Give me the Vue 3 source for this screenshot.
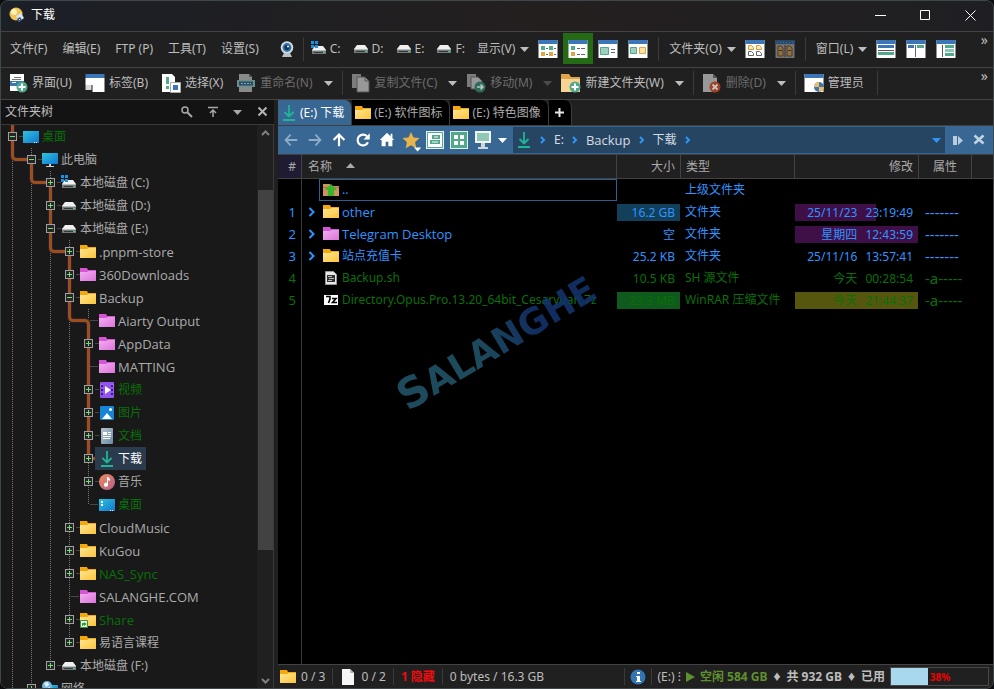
<script setup>
import { computed } from 'vue'

const ROW = 23
const STEP = 19

const tree = [
  { d: 0, s: '-', icon: 'desktop', t: '桌面', c: 'green' },
  { d: 1, s: '-', icon: 'pc', t: '此电脑' },
  { d: 2, s: '+', icon: 'sysdrive', t: '本地磁盘 (C:)' },
  { d: 2, s: '+', icon: 'drive', t: '本地磁盘 (D:)' },
  { d: 2, s: '-', icon: 'drive', t: '本地磁盘 (E:)' },
  { d: 3, s: '+', icon: 'folder', t: '.pnpm-store' },
  { d: 3, s: '+', icon: 'pink', t: '360Downloads' },
  { d: 3, s: '-', icon: 'folder', t: 'Backup' },
  { d: 4, s: '', icon: 'pink', t: 'Aiarty Output' },
  { d: 4, s: '+', icon: 'pink', t: 'AppData' },
  { d: 4, s: '', icon: 'pink', t: 'MATTING' },
  { d: 4, s: '+', icon: 'video', t: '视频', c: 'green' },
  { d: 4, s: '+', icon: 'picture', t: '图片', c: 'green' },
  { d: 4, s: '+', icon: 'doc', t: '文档', c: 'green' },
  { d: 4, s: '+', icon: 'download', t: '下载', c: 'selected' },
  { d: 4, s: '+', icon: 'music', t: '音乐' },
  { d: 4, s: '', icon: 'desktop2', t: '桌面', c: 'green' },
  { d: 3, s: '+', icon: 'folder', t: 'CloudMusic' },
  { d: 3, s: '+', icon: 'folder', t: 'KuGou' },
  { d: 3, s: '+', icon: 'folder', t: 'NAS_Sync', c: 'green' },
  { d: 3, s: '', icon: 'pink', t: 'SALANGHE.COM' },
  { d: 3, s: '+', icon: 'share', t: 'Share', c: 'green' },
  { d: 3, s: '+', icon: 'folder', t: '易语言课程' },
  { d: 2, s: '+', icon: 'drive', t: '本地磁盘 (F:)' },
  { d: 1, s: '+', icon: 'network', t: '网络' }
]

const cx = (d) => 11.5 + d * STEP
const cy = (i) => i * ROW + 11.5
const isLatin = (t) => /^[\x20-\x7e]+$/.test(t)

const guides = computed(() => {
  const bottom = tree.length * ROW
  const out = [{ x: cx(0), y1: 0, y2: bottom }]
  for (let d = 1; d <= 4; d++) {
    const at = tree.map((n, i) => (n.d === d ? i : -1)).filter((i) => i >= 0)
    out.push({ x: cx(d), y1: at[0] * ROW, y2: cy(at[at.length - 1]) })
  }
  return out
})

const trail = `M${cx(0)} 0V${cy(1) - 4}q0 4 4 4H${cx(1)}V${cy(2) - 4}q0 4 4 4H${cx(2)}V${cy(5) - 4}q0 4 4 4H${cx(3)}V${cy(8) - 4}q0 4 4 4H${cx(4) - 4}q4 0 4 4V${cy(14)}h8`

const menus = ['文件(F)', '编辑(E)', 'FTP (P)', '工具(T)', '设置(S)']
const drives = [
  { t: 'C:', icon: 'sysdrive' },
  { t: 'D:', icon: 'drive' },
  { t: 'E:', icon: 'drive' },
  { t: 'F:', icon: 'drive' }
]
const views = ['v-details', 'v-list', 'v-thumb', 'v-tiles']
const layouts = ['l-rows', 'l-cols', 'l-tree']

const tabs = [
  { t: '(E:) 下载', icon: 'download', on: true },
  { t: '(E:) 软件图标', icon: 'folder' },
  { t: '(E:) 特色图像', icon: 'folder' }
]
const crumbs = ['E:', 'Backup', '下载']

const files = [
  { n: 1, icon: 'folder', t: 'other', size: '16.2 GB', sb: '#123f5a', type: '文件夹', day: '25/11/23', time: '23:19:49', db: '#3f0f47', dw: 66, at: '-------' },
  { n: 2, icon: 'pink', t: 'Telegram Desktop', size: '空', type: '文件夹', day: '星期四', time: '12:43:59', db: '#3f0f47', dw: 100, at: '-------' },
  { n: 3, icon: 'folder', t: '站点充值卡', size: '25.2 KB', type: '文件夹', day: '25/11/16', time: '13:57:41', at: '-------' },
  { n: 4, icon: 'sh', t: 'Backup.sh', size: '10.5 KB', type: 'SH 源文件', day: '今天', time: '00:28:54', at: '-a-----', file: true },
  { n: 5, icon: 'zip', t: 'Directory.Opus.Pro.13.20_64bit_Cesaryuan.7z', size: '23.3 MB', sb: '#0f5a1c', type: 'WinRAR 压缩文件', day: '今天', time: '21:44:37', db: '#56560f', dw: 100, at: '-a-----', file: true }
]
const used = 38
</script>

<template>
  <svg class="sprite" width="0" height="0" aria-hidden="true">
    <defs>
      <linearGradient id="gy" x1="0" y1="0" x2="1" y2="1"><stop offset="0" stop-color="#ffe694" /><stop offset="1" stop-color="#fcc43a" /></linearGradient>
      <linearGradient id="gp" x1="0" y1="0" x2="1" y2="1"><stop offset="0" stop-color="#f3aff0" /><stop offset="1" stop-color="#dc74dc" /></linearGradient>
      <linearGradient id="gb" x1="0" y1="0" x2="1" y2="1"><stop offset="0" stop-color="#2cc3dc" /><stop offset="1" stop-color="#1276d0" /></linearGradient>
      <linearGradient id="gm" x1="0" y1="0" x2="1" y2="1"><stop offset="0" stop-color="#f08a5a" /><stop offset="1" stop-color="#b0608c" /></linearGradient>
      <linearGradient id="gd" x1="0" y1="0" x2="1" y2="1"><stop offset="0" stop-color="#b4c4d0" /><stop offset="1" stop-color="#6d8ba3" /></linearGradient>
    </defs>
    <symbol id="folder" viewBox="0 0 16 16"><path d="M0 1h7l1 2h8v3H0z" fill="#f5a80c" /><path d="M0 5h7l2-1h7v10H0z" fill="url(#gy)" /></symbol>
    <symbol id="pink" viewBox="0 0 16 16"><path d="M0 1h7l1 2h8v3H0z" fill="#d456d4" /><path d="M0 5h7l2-1h7v10H0z" fill="url(#gp)" /></symbol>
    <symbol id="share" viewBox="0 0 16 16"><path d="M0 1h7l1 2h8v3H0z" fill="#f5a80c" /><path d="M0 5h7l2-1h7v10H0z" fill="url(#gy)" /><path d="M.5 8.500h7v7h-7z" fill="#fff" stroke="#2ca02c" /><path d="M2 14v-3h2v-1l3 2-3 2v-1H3v1z" fill="#2ca02c" /></symbol>
    <symbol id="updir" viewBox="0 0 16 16"><path d="M0 2h7l1 2h8v10H0z" fill="#c9955c" /><path d="M0 5h16v1H0z" fill="#a97440" /><path d="M8 2l6 6h-3v6H5V8H2z" fill="#35b52a" /></symbol>
    <symbol id="desktop" viewBox="0 0 16 16"><path d="M0 2h16v12H0z" fill="url(#gb)" /><path d="M11 13h1v1h-1zM13 13h1v1h-1z" fill="#fff" /></symbol>
    <symbol id="desktop2" viewBox="0 0 16 16"><path d="M0 2h16v12H0z" fill="url(#gb)" /><path d="M2 4h2v2H2zM2 7h2v2H2zM11 13h1v1h-1zM13 13h1v1h-1z" fill="#fff" /></symbol>
    <symbol id="pc" viewBox="0 0 16 16"><path d="M0 1h16v11H0z" fill="url(#gb)" /><path d="M7 12h2v2h3v1H4v-1h3z" fill="#c5ced4" /></symbol>
    <symbol id="drive" viewBox="0 0 16 16"><path d="M4 4h8l3 4H1z" fill="#f0f0f0" /><path d="M1 8h14v4H1z" fill="#74797c" /><path d="M1 8h14v1H1z" fill="#b8bcbe" /><path d="M3 10h9v1H3z" fill="#34393b" /><path d="M12 10h2v1h-2z" fill="#43d17a" /></symbol>
    <symbol id="sysdrive" viewBox="0 0 16 16"><path d="M4 5h8l3 4H1z" fill="#f0f0f0" /><path d="M1 9h14v4H1z" fill="#74797c" /><path d="M1 9h14v1H1z" fill="#b8bcbe" /><path d="M3 11h9v1H3z" fill="#34393b" /><path d="M12 11h2v1h-2z" fill="#43d17a" /><path d="M0 0h3v3H0zM4 0h3v3H4zM0 4h3v3H0zM4 4h3v3H4z" fill="#1f8fe0" /></symbol>
    <symbol id="video" viewBox="0 0 16 16"><rect x="1" width="14" height="16" rx="1" fill="#9254ee" /><path d="M1 2h3v3H1zM12 2h3v3h-3z" fill="#a66df4" /><path d="M2 3h2v2H2zM2 7h2v2H2zM2 11h2v2H2zM12 3h2v2h-2zM12 7h2v2h-2zM12 11h2v2h-2z" fill="#3b1c7a" /><path d="M6 4l6 4-6 4z" fill="#fff" /></symbol>
    <symbol id="picture" viewBox="0 0 16 16"><rect x="1" y="1" width="14" height="14" rx="1" fill="#1685d8" /><path d="M3 14l5-6 5 6z" fill="#fff" /><circle cx="11.500" cy="4.500" r="1.500" fill="#fff" /></symbol>
    <symbol id="doc" viewBox="0 0 16 16"><rect x="2" width="12" height="16" rx="1" fill="url(#gd)" /><path d="M4 4h4v3H4zM9 4h3v1H9zM9 6h3v1H9zM4 8h8v1H4zM4 10h7v1H4z" fill="#fff" /></symbol>
    <symbol id="download" viewBox="0 0 16 16"><path d="M8 0v11M3.500 7L8 11.500 12.500 7" fill="none" stroke="#1fb596" stroke-width="1.800" /><path d="M2 14h12v2H2z" fill="#1fb596" /></symbol>
    <symbol id="music" viewBox="0 0 16 16"><circle cx="8" cy="8" r="8" fill="url(#gm)" /><path d="M8 3h1l2 2v2L9 6v4.500a2 2 0 1 1-1-1.500z" fill="#fff" /></symbol>
    <symbol id="network" viewBox="0 0 16 16"><path d="M5 4h11v10H5z" fill="url(#gb)" /><circle cx="5" cy="5" r="5" fill="#74b7df" /><path d="M2 2l4-1 1 3-3 2zM5 7l3-1-1 3z" fill="#e4f1f8" /></symbol>
    <symbol id="sh" viewBox="0 0 16 16"><path d="M2.500 1.500h8l3 3v10h-11z" fill="#e8e8e8" stroke="#999" /><path d="M4 5h8v7H4z" fill="#333" /><path d="M5 6h4v1H5zM6 8h5v1H6zM5 10h4v1H5z" fill="#bbb" /></symbol>
    <symbol id="zip" viewBox="0 0 16 16"><path d="M1 3h14v10H1z" fill="#fff" /><path d="M3 4.500h4V7L5.500 11M9 6.500h4L9.500 10.500H14" fill="none" stroke="#000" stroke-width="1.600" /></symbol>
    <symbol id="logo" viewBox="0 0 16 16"><circle cx="7" cy="7" r="6.500" fill="#f0c455" /><circle cx="5" cy="5" r="3" fill="#fff1b8" /><path d="M7 9l5-3 3 5-5 4z" fill="#d9e4ef" /><path d="M8 12l3-2 2 3-3 2z" fill="#2d4c86" /><path d="M10 12h1v1h-1z" fill="#fff" /></symbol>
    <symbol id="cam" viewBox="0 0 16 16"><circle cx="8" cy="6.500" r="6.300" fill="#d5dde0" /><circle cx="8" cy="6.500" r="4.400" fill="#2f6fae" /><circle cx="8" cy="6.500" r="2.500" fill="#16334f" /><circle cx="9" cy="5.500" r="1" fill="#fff" /><path d="M5 12h6l2 4H3z" fill="#b9c3c6" /></symbol>
    <!-- display mode glyphs -->
    <symbol id="win" viewBox="0 0 20 20"><path d="M.500 1h19v18H.500z" fill="#fff" /><path d="M.500 1h19v4H.500z" fill="#3c76b8" /></symbol>
    <symbol id="v-details" viewBox="0 0 20 20"><use href="#win" /><path d="M3 7h4v4H3zM11 7h4v4h-4z" fill="#4fa98a" /><path d="M3 13h4v4H3zM11 13h4v4h-4z" fill="#e0a44a" /><path d="M8 9.500h2M16 9.500h2M8 15.500h2M16 15.500h2" stroke="#666" /></symbol>
    <symbol id="v-list" viewBox="0 0 20 20"><use href="#win" /><path d="M3 7h4v4H3z" fill="#4fa98a" /><path d="M3 13h4v4H3z" fill="#e0a44a" /><path d="M9 9.500h3M13 9.500h4M9 15.500h3M13 15.500h4" stroke="#666" /></symbol>
    <symbol id="v-thumb" viewBox="0 0 20 20"><use href="#win" /><path d="M2.500 8.500h8v7h-8z" fill="#9fd0bd" stroke="#4fa98a" /><path d="M13 10.500h4M13 13.500h4" stroke="#666" /></symbol>
    <symbol id="v-tiles" viewBox="0 0 20 20"><use href="#win" /><path d="M2.500 8.500h6v6h-6z" fill="#9fd0bd" stroke="#4fa98a" /><path d="M11.500 8.500h6v6h-6z" fill="#ffe2a0" stroke="#e0a44a" /></symbol>
    <symbol id="f-grid" viewBox="0 0 20 20"><use href="#win" /><path d="M3.500 6.500h3l2 2v2h-5zM11.500 6.500h3l2 2v2h-5z" fill="#ffe9b8" stroke="#d99b3c" /><path d="M3.500 12.500h3l2 2v2h-5zM11.500 12.500h3l2 2v2h-5z" fill="#fff" stroke="#666" /></symbol>
    <symbol id="f-dual" viewBox="0 0 20 20"><path d="M.500 1h19v18H.500z" fill="#737373" /><path d="M.500 1h19v4H.500z" fill="#27496a" /><path d="M2 3.500h1M5 3.500h1M8 3.500h1M11 3.500h1M14 3.500h1M17 3.500h1" stroke="#3c76b8" /><path d="M3 7h3l2 2v8H3zM12 7h3l2 2v8h-5z" fill="#94703c" stroke="#4a3b24" /><path d="M10 6v12M4 11.500h3M13 11.500h3" stroke="#333" /></symbol>
    <symbol id="l-rows" viewBox="0 0 20 20"><use href="#win" /><path d="M2 6h16v3H2z" fill="#3c76b8" /><path d="M2 11h16v1H2z" fill="#555" /><path d="M2 13h16v3H2z" fill="#4fa98a" /></symbol>
    <symbol id="l-cols" viewBox="0 0 20 20"><use href="#win" /><path d="M2 6h6v3H2z" fill="#3c76b8" /><path d="M11 6h7v3h-7z" fill="#4fa98a" /><path d="M9 6h1v12H9z" fill="#666" /></symbol>
    <symbol id="l-tree" viewBox="0 0 20 20"><use href="#win" /><path d="M6 6h1v12H6z" fill="#555" /><path d="M9 6h9v3H9z" fill="#4fa98a" /><path d="M9 10h9v3H9z" fill="#8cc7b1" /><path d="M9 14h9v3H9z" fill="#4fa98a" /></symbol>
    <!-- command glyphs -->
    <symbol id="c-ui" viewBox="0 0 20 20"><path d="M2 1h14v17H2z" fill="#fff" /><path d="M6 4h7v1H6zM4 6h9v1H4z" fill="#777" /><path d="M2 8h14v5H2z" fill="#3c76b8" /><path d="M4 9h4v1H4z" fill="#fff" /><circle cx="14" cy="14" r="5.500" fill="#4fa98a" /><path d="M14 10.500v7M10.500 14h7" stroke="#fff" stroke-width="2" /></symbol>
    <symbol id="c-tab" viewBox="0 0 20 20"><path d="M.500 1h19v4H.500z" fill="#3c76b8" /><path d="M.500 5h19v14h-12v-7h-7z" fill="#fff" /><path d="M.500 12h6v5h-6z" fill="#d8d8d8" /></symbol>
    <symbol id="c-sel" viewBox="0 0 20 20"><path d="M1 1h10l3 3v15H1z" fill="#fff" /><path d="M5 4h3v7H5zM5 13h3v3H5z" fill="#4fa98a" /><path d="M9.500 9.500h10v10h-10z" fill="#fff" stroke="#aaa" /><path d="M12 12h5v5h-5z" fill="#3c76b8" /></symbol>
    <symbol id="c-ren" viewBox="0 0 20 20"><path d="M3 1h10l3 3v15H3z" fill="#8b8b8b" /><path d="M13 1v3h3z" fill="#555" /><path d="M1 7h18v7H1z" fill="#6a8f86" /><path d="M3 8.500h14v4H3z" fill="#2a4d6e" /><path d="M5 10.500h10" stroke="#7fa3bd" stroke-dasharray="2 1" /></symbol>
    <symbol id="c-copy" viewBox="0 0 20 20"><path d="M1 1h9v14H1z" fill="#7c7c7c" /><path d="M6 4h8l4 4v11H6z" fill="#989898" stroke="#555" /><path d="M14 4v4h4" fill="none" stroke="#555" /></symbol>
    <symbol id="c-move" viewBox="0 0 20 20"><path d="M1 1h9v13H1z" fill="#7c7c7c" /><path d="M5 4h7l4 4v8H5z" fill="#989898" stroke="#555" /><circle cx="14" cy="14" r="5.500" fill="#2f6b5c" /><path d="M11 14h6M14.500 11.500L17 14l-2.500 2.500" fill="none" stroke="#b8c8c4" stroke-width="1.500" /></symbol>
    <symbol id="c-new" viewBox="0 0 20 20"><path d="M0 1h8l2 3h9v3H0z" fill="#e0a44a" /><path d="M0 6h19v13H0z" fill="#f7d494" /><circle cx="14" cy="14" r="5.500" fill="#4fa98a" /><path d="M14 10.500v7M10.500 14h7" stroke="#fff" stroke-width="2" /></symbol>
    <symbol id="c-del" viewBox="0 0 20 20"><path d="M1 1h10l4 4v14H1z" fill="#989898" /><path d="M11 1v4h4z" fill="#555" /><circle cx="13" cy="14" r="5.500" fill="#a13f24" /><path d="M10.500 11.500l5 5M15.500 11.500l-5 5" stroke="#c4c4c4" stroke-width="1.800" /></symbol>
    <symbol id="c-admin" viewBox="0 0 20 20"><use href="#win" /><circle cx="15" cy="14" r="5" fill="#3c76b8" /><path d="M15 9a5 5 0 0 0-5 5h5zM15 19a5 5 0 0 0 5-5h-5z" fill="#f0bd5c" /></symbol>
    <!-- navigation glyphs -->
    <symbol id="n-back" viewBox="0 0 20 20"><path d="M17 10H4M9.500 4L4 10l5.500 6" fill="none" stroke="#8fadc6" stroke-width="2" /></symbol>
    <symbol id="n-fwd" viewBox="0 0 20 20"><path d="M3 10h13M10.500 4L16 10l-5.500 6" fill="none" stroke="#8fadc6" stroke-width="2" /></symbol>
    <symbol id="n-up" viewBox="0 0 20 20"><path d="M10 17V4M4 10l6-6 6 6" fill="none" stroke="#fff" stroke-width="2.400" /></symbol>
    <symbol id="n-re" viewBox="0 0 20 20"><path d="M15.500 12.500a6 6 0 1 1-1-6.500" fill="none" stroke="#fff" stroke-width="2.400" /><path d="M17.500 2.500v7h-7z" fill="#fff" /></symbol>
    <symbol id="n-home" viewBox="0 0 20 20"><path d="M10 2l8 8h-2v7h-4.500v-5h-3v5H4v-7H2z" fill="#fff" /><path d="M14 3h2v5h-2z" fill="#fff" /></symbol>
    <symbol id="n-star" viewBox="0 0 20 20"><path d="M10 1l2.800 6.200 6.700.7-5 4.600 1.400 6.700L10 15.800l-5.900 3.400 1.400-6.700-5-4.600 6.700-.7z" fill="#e9b44c" /></symbol>
    <symbol id="n-split" viewBox="0 0 18 18"><path d="M0 0h18v18H0z" fill="#e8efec" /><path d="M1.500 1.500h15v15h-15z" fill="#fff" stroke="#4fa98a" /><path d="M6 4h8v4H6zM4 9h10v4H4z" fill="#4fa98a" /><path d="M8 6h4M6 11h6" stroke="#fff" /></symbol>
    <symbol id="n-grid" viewBox="0 0 18 18"><path d="M0 0h18v18H0z" fill="#e8efec" /><path d="M1 1h16v16H1z" fill="#4fa98a" /><path d="M4 4h4v4H4zM10 4h4v4h-4zM4 10h4v4H4zM10 10h4v4h-4z" fill="#fff" /></symbol>
    <symbol id="n-pc" viewBox="0 0 18 18"><path d="M1 0h16v12H1z" fill="#f1f4f4" /><path d="M3 2h12v8H3z" fill="#8fc9b6" /><path d="M7 12h4v4h3v2H4v-2h3z" fill="#cfd5d8" /></symbol>
    <symbol id="info" viewBox="0 0 16 16"><circle cx="8" cy="8" r="7.500" fill="#3275b5" /><path d="M7 3h3v2H7zM6 7h4v5h1v1H6v-1h1V8H6z" fill="#fff" /></symbol>
    <symbol id="page" viewBox="0 0 16 16"><path d="M2 0h8l4 4v12H2z" fill="#f6f6f6" /><path d="M10 0v4h4z" fill="#b9b9b9" /></symbol>
    <symbol id="tri" viewBox="0 0 10 10"><path d="M0 3h9L4.500 8z" fill="currentColor" /></symbol>
    <symbol id="chev" viewBox="0 0 10 10"><path d="M2.500 1l4 4-4 4" fill="none" stroke="currentColor" stroke-width="2" /></symbol>
    <symbol id="chev-s" viewBox="0 0 10 10"><path d="M3 2l3 3-3 3" fill="none" stroke="currentColor" stroke-width="2" /></symbol>
  </svg>

  <div class="window">
    <header class="titlebar">
      <svg class="i16"><use href="#logo" /></svg>
      <h1>下载</h1>
      <div class="winbtns">
        <button aria-label="最小化"><svg width="11" height="11"><path d="M0 5.500h11" stroke="#fff" /></svg></button>
        <button aria-label="最大化"><svg width="11" height="11"><path d="M.500.500h9v9h-9z" fill="none" stroke="#fff" /></svg></button>
        <button aria-label="关闭"><svg width="11" height="11"><path d="M.500.500l10 10M10.500.500l-10 10" stroke="#fff" /></svg></button>
      </div>
    </header>

    <nav class="bar menubar">
      <button v-for="m in menus" :key="m" class="menu">{{ m }}</button>
      <button class="cam" aria-label="截图"><svg class="i16"><use href="#cam" /></svg></button>
      <i class="sep"></i>
      <div class="drives">
        <button v-for="d in drives" :key="d.t"><svg class="i16"><use :href="'#' + d.icon" /></svg>{{ d.t }}</button>
      </div>
      <button class="drop">显示(V)<svg class="i10"><use href="#tri" /></svg></button>
      <div class="modes">
        <button v-for="v in views" :key="v" :class="{ on: v === 'v-list' }" :aria-label="v"><svg class="i20"><use :href="'#' + v" /></svg></button>
      </div>
      <i class="sep"></i>
      <button class="drop wide">文件夹(O)<svg class="i10"><use href="#tri" /></svg></button>
      <div class="modes">
        <button aria-label="f-grid"><svg class="i20"><use href="#f-grid" /></svg></button>
        <button aria-label="f-dual"><svg class="i20"><use href="#f-dual" /></svg></button>
      </div>
      <i class="sep"></i>
      <button class="drop wide">窗口(L)<svg class="i10"><use href="#tri" /></svg></button>
      <div class="modes">
        <button v-for="l in layouts" :key="l" :aria-label="l"><svg class="i20"><use :href="'#' + l" /></svg></button>
      </div>
      <button class="more">»</button>
    </nav>

    <nav class="bar cmdbar">
      <button class="cmd"><svg class="i20"><use href="#c-ui" /></svg>界面(U)</button>
      <button class="cmd"><svg class="i20"><use href="#c-tab" /></svg>标签(B)</button>
      <button class="cmd"><svg class="i20"><use href="#c-sel" /></svg>选择(X)</button>
      <button class="cmd off"><svg class="i20"><use href="#c-ren" /></svg>重命名(N)</button>
      <button class="arrow" aria-label="重命名选项"><svg class="i10"><use href="#tri" /></svg></button>
      <i class="sep"></i>
      <button class="cmd off"><svg class="i20"><use href="#c-copy" /></svg>复制文件(C)</button>
      <button class="arrow" aria-label="复制选项"><svg class="i10"><use href="#tri" /></svg></button>
      <button class="cmd off"><svg class="i20"><use href="#c-move" /></svg>移动(M)</button>
      <button class="arrow off" aria-label="移动选项"><svg class="i10"><use href="#tri" /></svg></button>
      <button class="cmd"><svg class="i20"><use href="#c-new" /></svg>新建文件夹(W)</button>
      <button class="arrow" aria-label="新建选项"><svg class="i10"><use href="#tri" /></svg></button>
      <i class="sep"></i>
      <button class="cmd off"><svg class="i20"><use href="#c-del" /></svg>删除(D)</button>
      <button class="arrow" aria-label="删除选项"><svg class="i10"><use href="#tri" /></svg></button>
      <i class="sep"></i>
      <button class="cmd"><svg class="i20"><use href="#c-admin" /></svg>管理员</button>
      <i class="sep"></i>
      <button class="more">»</button>
    </nav>

    <main class="panes">
      <aside class="side">
        <div class="sidehead">
          <h2>文件夹树</h2>
          <button aria-label="搜索"><svg width="12" height="12"><circle cx="4" cy="4" r="3" fill="none" stroke="#a8a8a8" stroke-width="1.500" /><path d="M6.500 6.500l4.500 4.500" stroke="#a8a8a8" stroke-width="2" /></svg></button>
          <button aria-label="置顶"><svg width="12" height="12"><path d="M1 1.500h10M6 11V4M3 7l3-3 3 3" fill="none" stroke="#a8a8a8" stroke-width="1.500" /></svg></button>
          <button aria-label="选项"><svg class="i10"><use href="#tri" /></svg></button>
          <button aria-label="关闭文件夹树"><svg width="12" height="12"><path d="M1.500 1.500l8 8M9.500 1.500l-8 8" stroke="#b4b4b4" stroke-width="2" /></svg></button>
        </div>
        <div class="treewrap">
          <div class="tree">
            <svg class="lines" width="110" :height="tree.length * ROW">
              <line v-for="g in guides" :key="g.x" :x1="g.x" :x2="g.x" :y1="g.y1" :y2="g.y2" stroke="#777" stroke-dasharray="1 1" />
              <path :d="trail" fill="none" stroke="#2b1d38" stroke-width="5" />
              <path :d="trail" fill="none" stroke="#9a5016" stroke-width="3" />
              <template v-for="(n, i) in tree" :key="i">
                <path :d="`M${cx(n.d) + (n.s ? 7 : 2)} ${cy(i)}H${cx(n.d) + 10}`" stroke="#777" stroke-dasharray="1 1" />
                <g v-if="n.s">
                  <rect :x="cx(n.d) - 4" :y="cy(i) - 4" width="8" height="8" fill="#262626" stroke="#a0a0a0" />
                  <path :d="`M${cx(n.d) - 2.5} ${cy(i)}h5` + (n.s === '+' ? `m-2.5 -2.5v5` : '')" stroke="#6fe06f" />
                </g>
              </template>
            </svg>
            <ul>
              <li v-for="(n, i) in tree" :key="i" :class="'d' + n.d">
                <a href="#" class="node" :class="[n.c, { latin: isLatin(n.t) }]"><svg class="i16"><use :href="'#' + n.icon" /></svg>{{ n.t }}</a>
              </li>
            </ul>
          </div>
          <div class="scroll">
            <svg width="9" height="9"><path d="M1 6l3.500-3.500L8 6" fill="none" stroke="#808080" stroke-width="2" /></svg>
            <div class="track"><div class="above"></div><div class="thumb"></div><div class="below"></div></div>
            <svg width="9" height="9"><path d="M1 3l3.500 3.500L8 3" fill="none" stroke="#808080" stroke-width="2" /></svg>
          </div>
        </div>
      </aside>

      <section class="lister">
        <div class="tabs">
          <button v-for="t in tabs" :key="t.t" :class="['tab', { on: t.on }]"><svg class="i16"><use :href="'#' + t.icon" /></svg>{{ t.t }}</button>
          <button class="tab plus" aria-label="新标签"><svg width="9" height="9"><path d="M4.500 0v9M0 4.500h9" stroke="#e6e6e6" stroke-width="2" /></svg></button>
        </div>

        <div class="nav">
          <div class="navbtns">
            <button aria-label="后退"><svg class="i18"><use href="#n-back" /></svg></button>
            <button aria-label="前进"><svg class="i18"><use href="#n-fwd" /></svg></button>
            <button aria-label="向上"><svg class="i18"><use href="#n-up" /></svg></button>
            <button aria-label="刷新"><svg class="i18"><use href="#n-re" /></svg></button>
            <button aria-label="主页"><svg class="i18"><use href="#n-home" /></svg></button>
            <button class="fav" aria-label="收藏"><svg class="i18"><use href="#n-star" /></svg><svg class="badge"><use href="#tri" /></svg></button>
            <button aria-label="样式"><svg class="i18"><use href="#n-split" /></svg></button>
            <button aria-label="网格"><svg class="i18"><use href="#n-grid" /></svg></button>
            <button aria-label="设备"><svg class="i18"><use href="#n-pc" /></svg></button>
            <button aria-label="设备选项"><svg class="i10"><use href="#tri" /></svg></button>
          </div>
          <div class="crumbs">
            <svg class="i16"><use href="#download" /></svg>
            <svg class="i10 chev"><use href="#chev-s" /></svg>
            <template v-for="c in crumbs" :key="c">
              <a href="#" :class="{ latin: isLatin(c) && c.length > 2 }">{{ c }}</a>
              <svg class="i10 chev"><use href="#chev-s" /></svg>
            </template>
            <button class="hist" aria-label="历史"><svg class="i10"><use href="#tri" /></svg></button>
          </div>
          <div class="navend">
            <button aria-label="双窗"><svg width="11" height="11"><path d="M0 1h4v9H0zM5 1l5 4.500L5 10z" fill="#b9ccdb" /></svg></button>
            <button aria-label="关闭列表"><svg width="12" height="12"><path d="M1.500 1.500l9 8M10.500 1.500l-9 8" stroke="#c3d3e0" stroke-width="2.500" /></svg></button>
          </div>
        </div>

        <div class="list">
          <table>
            <colgroup><col class="w-n" /><col /><col class="w-size" /><col class="w-type" /><col class="w-mod" /><col class="w-attr" /><col class="w-end" /></colgroup>
            <thead>
              <tr><th class="idx">#</th><th class="name">名称<svg width="9" height="5"><path d="M0 5h9L4.500 0z" fill="#aaa" /></svg></th><th class="r">大小</th><th>类型</th><th class="r">修改</th><th class="c">属性</th><th></th></tr>
            </thead>
            <tbody>
              <tr><td></td><td><span class="fn focus"><svg class="i16"><use href="#updir" /></svg>..</span></td><td></td><td class="type">上级文件夹</td><td></td><td></td><td></td></tr>
              <tr v-for="f in files" :key="f.n" :class="{ file: f.file }">
                <td class="num">{{ f.n }}</td>
                <td><span class="fn" :class="{ latin: isLatin(f.t) && !f.file }"><svg v-if="!f.file" class="i10 exp"><use href="#chev" /></svg><svg class="i16"><use :href="'#' + f.icon" /></svg>{{ f.t }}</span></td>
                <td><span class="gauge" :style="{ background: f.sb }">{{ f.size }}</span></td>
                <td class="type">{{ f.type }}</td>
                <td><span class="gauge" :style="{ background: f.db ? `linear-gradient(90deg, ${f.db} ${f.dw}%, transparent ${f.dw}%)` : 'none' }">{{ f.day }}<b>{{ f.time }}</b></span></td>
                <td class="attr">{{ f.at }}</td>
                <td></td>
              </tr>
            </tbody>
          </table>
          <div class="mark" aria-hidden="true"><span>S</span>ALANGHE</div>
        </div>

        <footer class="status">
          <span class="st"><svg class="i16"><use href="#folder" /></svg>0 / 3</span>
          <i class="sep"></i>
          <span class="st"><svg class="i16"><use href="#page" /></svg>0 / 2</span>
          <i class="sep"></i>
          <strong class="hid">1 隐藏</strong>
          <i class="sep"></i>
          <span>0 bytes / 16.3 GB</span>
          <div class="disk">
            <i class="sep"></i>
            <svg class="i16"><use href="#info" /></svg>
            <i class="sep"></i>
            <span>(E:) ⁝</span>
            <svg width="9" height="10"><path d="M0 0l9 5-9 5z" fill="#5f8f2f" /></svg>
            <strong class="free">空闲 584 GB</strong>
            <small>♦</small>
            <strong>共 932 GB</strong>
            <small>♦</small>
            <strong>已用</strong>
            <div class="meter"><div :style="{ width: used + '%' }"></div><em>{{ used }}%</em></div>
          </div>
        </footer>
      </section>
    </main>
  </div>
</template>

<style>
html, body { margin: 0; background: #0a0c12; }
</style>

<style scoped>
.sprite { position: absolute; }
.window {
  box-sizing: border-box; height: 100vh; display: flex; flex-direction: column; overflow: hidden;
  border: 1px solid #40474b; border-radius: 8px; background: #202020; color: #bdbdbd;
  font: 12px/16px "Noto Sans", "Noto Sans CJK SC", sans-serif;
}
button { font: inherit; color: inherit; background: none; border: 0; padding: 0; margin: 0; display: flex; align-items: center; white-space: nowrap; }
a { color: inherit; text-decoration: none; }
svg { flex: none; display: block; }
ul { list-style: none; margin: 0; padding: 0; }
h1, h2 { font: inherit; margin: 0; }
.i10 { width: 10px; height: 10px; }
.i16 { width: 16px; height: 16px; }
.i18 { width: 18px; height: 18px; }
.i20 { width: 20px; height: 20px; }
.latin { font-family: "Open Sans", "Noto Sans CJK SC", sans-serif; font-size: 13px; }
.sep { flex: none; width: 1px; height: 24px; background: #3a3a3a; }

.titlebar { display: flex; align-items: center; height: 28px; padding: 0 0 2px 8px; gap: 6px; background: linear-gradient(90deg, #1b1f26, #241f1f 55%, #1f1f23); color: #fff; border-bottom: 1px solid #434343; flex: none; }
.winbtns { margin-left: auto; display: flex; }
.winbtns button { width: 45px; height: 28px; justify-content: center; }

.bar { display: flex; align-items: center; flex: none; border-bottom: 1px solid #434343; padding-bottom: 2px; }
.menubar { height: 33px; padding-left: 9px; }
.menu { margin-right: 15px; }
.cam { margin: 0 8px 0 5px; }
.drives { display: flex; gap: 12px; padding: 0 12px 0 7px; }
.drives button { gap: 3px; }
.drop { gap: 5px; }
.drop.wide { margin-left: 10px; }
.modes { display: flex; padding: 0 5px 0 3px; }
.modes button { width: 30px; height: 31px; justify-content: center; }
.modes .on { background: #256a14; }
.more { margin-left: auto; align-self: flex-start; padding-right: 5px; font-size: 14px; }
.cmdbar { height: 29px; padding-left: 7px; }
.cmd { gap: 4px; margin-right: 13px; }
.cmd.off { color: #6c6c6c; }
.arrow { margin: 0 8px 0 -2px; }
.arrow.off { color: #4c4c4c; }
.sep + .cmd { margin-left: 8px; }

.panes { flex: 1; min-height: 0; display: flex; }
.side { width: 273px; margin-right: 4px; flex: none; display: flex; flex-direction: column; background: #131313; }
.sidehead { display: flex; align-items: center; height: 24px; flex: none; padding: 0 5px 0 4px; gap: 14px; }
.sidehead h2 { flex: 1; }
.sidehead button { color: #a8a8a8; }
.treewrap { flex: 1; min-height: 0; display: flex; background: #191919; border: 1px solid #3a3a3a; border-left: 0; border-bottom: 0; }
.tree { position: relative; flex: 1; overflow: hidden; }
.lines { position: absolute; left: 0; top: 0; }
.tree li { display: flex; height: 23px; }
.node { position: relative; display: flex; align-items: center; gap: 3px; padding: 0 4px; white-space: nowrap; color: #ababab; }
.d0 { padding-left: 18px; }
.d1 { padding-left: 37px; }
.d2 { padding-left: 56px; }
.d3 { padding-left: 75px; }
.d4 { padding-left: 94px; }
.node.green { color: #087008; }
.node.selected { background: #293b4d; color: #fff; }
.scroll { width: 16px; flex: none; display: flex; flex-direction: column; align-items: center; gap: 4px; padding: 4px 0 3px; background: #202020; }
.track { flex: 1; width: 15px; display: flex; flex-direction: column; }
.above { flex: 9; }
.thumb { flex: 68; background: #424242; }
.below { flex: 23; }

.lister { flex: 1; min-width: 0; display: flex; flex-direction: column; }
.tabs { display: flex; height: 25px; flex: none; border-bottom: 1px solid #3f3f3f; }
.tab { gap: 3px; padding: 0 7px 0 3px; background: #000; border-right: 1px solid #3c3c3c; border-radius: 0 7px 0 0; color: #ababab; }
.tab.on { background: #386793; color: #fff; }
.tab.plus { width: 23px; padding: 0; justify-content: center; }
.nav { display: flex; height: 29px; box-sizing: border-box; flex: none; background: #386793; border-bottom: 1px solid #3f3f3f; }
.navbtns { display: flex; align-items: center; gap: 6px; padding: 0 5px 0 4px; color: #fff; }
.fav { position: relative; }
.badge { position: absolute; right: -2px; bottom: -4px; width: 8px; height: 8px; color: #fff; }
.crumbs { flex: 1; display: flex; align-items: center; gap: 6px; padding: 0 3px; margin: 1px 0; background: #264562; color: #d4dce3; }
.chev { color: #2f96f5; }
.hist { margin-left: auto; color: #2f96f5; }
.navend { width: 48px; flex: none; display: flex; align-items: center; justify-content: space-evenly; }

.list { position: relative; flex: 1; min-height: 0; overflow: hidden; background: linear-gradient(90deg, transparent 23px, #3a3a3a 23px, #3a3a3a 24px, transparent 24px) #000; }
table { width: 100%; table-layout: fixed; border-collapse: separate; border-spacing: 0; color: #3094ff; }
.w-n { width: 24px; }
.w-size { width: 64px; }
.w-type { width: 114px; }
.w-mod { width: 124px; }
.w-attr { width: 53px; }
.w-end { width: 21px; }
th { box-sizing: border-box; height: 24px; padding: 0 5px; text-align: left; font-weight: 400; color: #ababab; background: #202020; border-right: 1px solid #434343; border-bottom: 1px solid #434343; }
th:last-child { border-right: 0; }
th.idx { background: #1f1b33; text-align: right; }
th.name { padding-left: 6px; }
th.name svg { display: inline-block; margin-left: 14px; vertical-align: 3px; }
th.r { text-align: right; }
th.c { text-align: center; }
td { box-sizing: border-box; height: 22px; padding: 0; white-space: nowrap; }
.num { text-align: right; padding-right: 6px; font-size: 13px; }
.fn { display: flex; align-items: center; gap: 3px; margin-left: 21px; }
.focus { box-sizing: border-box; height: 22px; margin-left: 17px; padding-left: 3px; border: 1px solid #2f5f92; }
.exp { margin-left: -16px; margin-right: 3px; color: #3094ff; }
.type { padding-left: 4px; }
.gauge { display: block; height: 17px; line-height: 17px; margin-right: 1px; padding-right: 5px; text-align: right; }
.gauge b { font-weight: 400; margin-left: 8px; }
.attr { padding-left: 6px; font-size: 15px; }
.file { color: #087008; }
.mark { position: absolute; left: 107px; top: 167px; font: 700 36px/40px "DejaVu Sans", sans-serif; color: transparent; background: linear-gradient(90deg, #22566add 40%, #14346edd 70%); background-clip: text; transform: rotate(-31deg); }
.mark span { font-size: 42px; }

.status { display: flex; align-items: center; height: 23px; flex: none; gap: 7px; padding-left: 2px; border-top: 1px solid #434343; }
.st { display: flex; align-items: center; gap: 5px; }
.status .sep { height: 17px; }
.hid { color: #f00c0c; }
.disk { margin-left: auto; display: flex; align-items: center; gap: 5px; }
.free { color: #5f8f2f; }
.disk small { font-size: 9px; }
.meter { display: flex; align-items: center; width: 97px; height: 17px; border: 1px solid #484848; margin-right: 4px; }
.meter div { height: 100%; background: #a8d8ee; }
.meter em { font: bold 10px/12px "Noto Sans", sans-serif; color: #e00; padding-left: 2px; }
</style>
